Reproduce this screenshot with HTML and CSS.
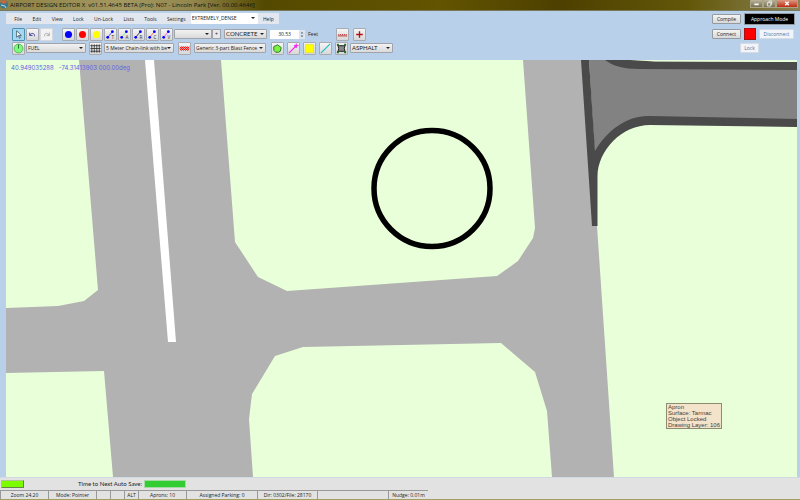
FILE: index.html
```
<!DOCTYPE html>
<html lang="en">
<head>
<meta charset="utf-8">
<title>Airport Design Editor X</title>
<link rel="stylesheet" href="styles.css">
</head>
<body>
<header class="titlebar">
  <svg class="logo" viewBox="0 0 8 9"><circle cx="4" cy="4.500" r="4" fill="#367b91"/><path d="M0 2 4 0 7 2 4 4Z" fill="#d96138"/><path d="m1 5 4 1 1 2" stroke="#b9dbdf" fill="none"/></svg>
  <h1 class="title">AIRPORT DESIGN EDITOR X&nbsp; v01.51.4645 BETA (Pro): N07 - Lincoln Park [Ver. 00.00.4646]</h1>
  <div class="window-buttons">
    <button class="win" aria-label="Minimize"><svg viewBox="0 0 13 8"><path d="M4 5h5" stroke="#fff" stroke-width="2"/></svg></button>
    <button class="win" aria-label="Restore"><svg viewBox="0 0 13 8"><path d="M4 3h4v4H4zM6 3V1h3v4H8" stroke="#eee" fill="none"/></svg></button>
    <button class="win close" aria-label="Close"><svg viewBox="0 0 22 8"><path d="m9 2 4 4m0-4L9 6" stroke="#fff" stroke-width="1.500"/></svg></button>
  </div>
</header>
<div class="commands">
  <div class="left">
    <nav class="menu">
      <button>File</button><button>Edit</button><button>View</button><button>Lock</button><button>Un-Lock</button><button>Lists</button><button>Tools</button><button>Settings</button>
      <span class="combo flat density"><select aria-label="Scenery density"><option>EXTREMELY_DENSE</option></select></span>
      <button class="help">Help</button>
    </nav>
    <div class="toolbar">
      <div class="group first">
        <button class="tool active" aria-label="Pointer"><svg viewBox="0 0 14 14"><path d="M5 3v7l2-2 1 3 1-.5L8 8h2Z" fill="#fff" stroke="#234" stroke-width=".7"/></svg></button>
        <button class="tool" aria-label="Undo"><svg viewBox="0 0 14 14"><path d="M4 5v3h3M4 8c1-3 6-3 5 1" stroke="#3a3a9c" fill="none"/></svg></button>
        <button class="tool off" aria-label="Redo"><svg viewBox="0 0 14 14"><path d="M10 5v3H7m3 0C9 5 4 5 5 9" stroke="#aaa" fill="none"/></svg></button>
      </div>
      <div class="group shapes">
        <button class="tool" aria-label="Blue point"><svg viewBox="0 0 14 14"><circle cx="7" cy="7" r="3.800" fill="#00f"/></svg></button>
        <button class="tool" aria-label="Red point"><svg viewBox="0 0 14 14"><circle cx="7" cy="7" r="3.800" fill="red"/></svg></button>
        <button class="tool" aria-label="Yellow point"><svg viewBox="0 0 14 14"><circle cx="7" cy="7" r="3.800" fill="#ff0"/></svg></button>
        <button class="tool" aria-label="Taxi link"><svg viewBox="0 0 14 14"><path d="m4 10 5-6" stroke="#44f"/><circle cx="4" cy="10" r="1.500" fill="#00f"/><circle cx="9" cy="4" r="1.500" fill="#00f"/><text x="8" y="12">T</text></svg></button>
        <button class="tool" aria-label="Apron link"><svg viewBox="0 0 14 14"><path d="m4 10 5-6" stroke="#8e8"/><circle cx="4" cy="10" r="1.500" fill="#00f"/><circle cx="9" cy="4" r="1.500" fill="#00f"/><text x="8" y="12">A</text></svg></button>
        <button class="tool" aria-label="Runway link"><svg viewBox="0 0 14 14"><path d="m4 10 5-6" stroke="#333"/><circle cx="4" cy="10" r="1.500" fill="#00f"/><circle cx="9" cy="4" r="1.500" fill="#00f"/><text x="8" y="12">R</text></svg></button>
        <button class="tool" aria-label="Closed link"><svg viewBox="0 0 14 14"><path d="m4 10 5-6" stroke="#f64"/><circle cx="4" cy="10" r="1.500" fill="#00f"/><circle cx="9" cy="4" r="1.500" fill="#00f"/><text x="8" y="12">C</text></svg></button>
        <button class="tool" aria-label="Vehicle link"><svg viewBox="0 0 14 14"><path d="m4 10 5-6" stroke="#f4f"/><circle cx="4" cy="10" r="1.500" fill="#00f"/><circle cx="9" cy="4" r="1.500" fill="#00f"/><text x="8" y="12">V</text></svg></button>
      </div>
      <span class="combo name"><select aria-label="Taxiway name"><option></option></select></span>
      <button class="plus" aria-label="Add name">+</button>
      <span class="combo surface"><select aria-label="Surface"><option>CONCRETE</option></select></span>
      <input class="width" id="width" value="30.53">
      <span class="spin"><svg viewBox="0 0 5 10"><path d="m1 4 1.500-2L4 4ZM1 6l1.500 2L4 6Z" fill="#567"/></svg></span>
      <label class="unit" for="width">Feet</label>
      <div class="group marks">
        <button class="tool" aria-label="Approach lights"><svg viewBox="0 0 14 14"><path d="M2 8.500h10" stroke="#b22"/><path d="M2.500 7h9" stroke="#b22" stroke-dasharray="1 1"/></svg></button>
        <button class="tool" aria-label="Add marker"><svg viewBox="0 0 14 14"><path d="M7 3.500v7M3.500 7h7" stroke="#b00d14" stroke-width="1.400"/></svg></button>
      </div>
    </div>
    <div class="toolbar">
      <button class="tool" aria-label="Parking"><svg viewBox="0 0 14 14"><circle cx="7" cy="7" r="4.800" fill="#7cfa7c" stroke="#3a9c44" stroke-width=".7"/><path d="M7 2.500V7" stroke="#286b2d"/></svg></button>
      <span class="combo fuel"><select aria-label="Parking type"><option>FUEL</option></select></span>
      <button class="tool" aria-label="Fence"><svg viewBox="0 0 14 14"><path d="M1.500 4h11M1.500 7h11M1.500 10h11M3 2.500v9M5.700 2.500v9M8.400 2.500v9M11.100 2.500v9" stroke="#222" stroke-width=".8"/></svg></button>
      <span class="combo fence"><select aria-label="Fence type"><option>5 Meter Chain-link with be</option></select></span>
      <button class="tool blast-tool" aria-label="Blast fence"><svg viewBox="0 0 14 14"><path d="m2 5 2 2 2-2 2 2 2-2 2 2M2 7l2-2 2 2 2-2 2 2 2-2M2 7l2 2 2-2 2 2 2-2 2 2M2 9l2-2 2 2 2-2 2 2 2-2" stroke="red" fill="none"/></svg></button>
      <span class="combo blast"><select aria-label="Blast fence type"><option>Generic 3-part Blast Fence</option></select></span>
      <div class="group draw">
        <button class="tool" aria-label="Polygon"><svg viewBox="0 0 14 14"><path d="m7 3 4 3-1 4-2 1H5L3 9V5Z" fill="#7cf33e" stroke="#267326"/></svg></button>
        <button class="tool" aria-label="Edge"><svg viewBox="0 0 14 14"><path d="m2 12 8-8M7.500 4h5m-2.500-2.500v5" stroke="#ee30ee" stroke-width="1.300"/></svg></button>
        <button class="tool" aria-label="Fill"><svg viewBox="0 0 14 14"><path d="M2.500 2.500h9v9h-9z" fill="#ff0" stroke="#cc4" stroke-width=".5"/></svg></button>
        <button class="tool" aria-label="Line"><svg viewBox="0 0 14 14"><path d="m2 12 10-10" stroke="#25bec5" stroke-width="1.300"/></svg></button>
        <button class="tool" aria-label="Apron"><svg viewBox="0 0 14 14"><path d="M3 3 5 4h4l2-1-1 4 1 4-2-1H5l-2 1 1-4Z" fill="#888" stroke="#111"/><path d="M2 2h2v2H2zM10 2h2v2h-2zM2 10h2v2H2zM10 10h2v2h-2z" fill="#197323"/></svg></button>
      </div>
      <span class="combo apron"><select aria-label="Apron surface"><option>ASPHALT</option></select></span>
    </div>
  </div>
  <div class="right">
    <div class="actions"><button class="push">Compile</button><button class="push approach">Approach Mode</button></div>
    <div class="actions connect"><button class="push">Connect</button><span class="lamp"></span><button class="push disabled disconnect">Disconnect</button></div>
    <div class="actions lock"><button class="push disabled">Lock</button></div>
  </div>
</div>
<main class="canvas">
  <svg class="map" viewBox="6 60 791 417" preserveAspectRatio="xMinYMin slice">
    <path d="M6 60H797V477H6Z" fill="#e9ffda"/>
    <path d="M79 60H221L235 242 258 277 287 291 497 276 518 261 533 238 535 228 523 60H582L597 226 614 477H552L547 411 535 372 501 343 303 347 275 356 252 394 249 419 253 477H113L104 371 6 373V308L58 306 84 301 98 290Z" fill="#b2b2b2"/>
    <path d="M145 60H154L176 342H168Z" fill="#fff"/>
    <path d="M589 60H797V123H650C620 124 601 145 596 174Z" fill="#828282"/>
    <path d="M581 60H589L595 151C607 130 628 115 650 116L797 119V127L650 125C622 125 598 150 597.500 176V226H592Z" fill="#4a4a4a"/>
    <path d="M605 60H633L655 61.500 797 62V70L640 69C623 69 613 66 605 60Z" fill="#4a4a4a"/>
    <path d="M630 60H797V62L655 61.500Z" fill="#e9ffda"/>
    <circle cx="432" cy="188.500" r="58" fill="none" stroke="#000" stroke-width="5.500"/>
  </svg>
  <div class="coordinates">40.949035288 &nbsp; -74.31413903 000.00deg</div>
  <div class="tooltip">Apron<br>Surface: Tarmac<br>Object Locked<br>Drawing Layer: 106</div>
</main>
<footer class="status">
  <div class="save"><span class="ready"></span><label class="save-label" for="autosave">Time to Next Auto Save:</label><progress id="autosave" max="1" value="1"></progress></div>
  <div class="cells">
    <span class="cell zoom">Zoom 24.20</span><span class="cell mode">Mode: Pointer</span><span class="cell small"></span><span class="cell small"></span><span class="cell small">ALT</span><span class="cell zoom">Aprons: 10</span><span class="cell wide">Assigned Parking: 0</span><span class="cell dir">Dir: 0302/File: 28170</span><span class="cell wide"></span><span class="cell nudge">Nudge: 0.01m</span>
  </div>
</footer>
</body>
</html>
```
FILE: styles.css
```
* { box-sizing: border-box; }
body {
  margin: 0;
  height: 100vh;
  display: flex;
  flex-direction: column;
  overflow: hidden;
  background: #b9d0eb;
  color: #222;
  font: 5px/8px "Open Sans", sans-serif;
}
button, select, input { margin: 0; padding: 0; font: inherit; color: inherit; border: 0; border-radius: 0; }
svg { display: block; }
.titlebar {
  display: flex;
  height: 11px;
  flex: none;
  background: linear-gradient(90deg, #8e8145, #a39860 15%, #93874e 24%, #544900 33%, #625400 55%, #4d4000 70%, #625709 86%, #8c8355);
  border-bottom: 1px solid #77785c;
}
.logo { width: 8px; height: 9px; }
.title { flex: 1; margin: 0 0 0 2px; font-size: 6px; line-height: 10px; font-weight: 400; color: #111; white-space: nowrap; }
.window-buttons { display: flex; height: 8px; margin-right: 2px; }
.win { width: 13px; background: linear-gradient(#bbb49a, #777052); border: 1px solid #aaa386; border-top: 0; }
.win svg { height: 7px; width: 100%; }
.win.close { width: 22px; background: linear-gradient(#dc9a82, #bd2b12); }
.commands { display: flex; justify-content: space-between; height: 49px; flex: none; padding: 2px 5px 0 6px; }
.menu { display: flex; width: 273px; height: 11px; margin-bottom: 3px; padding-left: 3px; background: #e2e7ef; }
.menu button { background: none; padding: 0 4px; flex: 1 0 auto; }
.toolbar { display: flex; align-items: center; height: 14px; padding-left: 6px; }
.group { display: flex; gap: 1px; }
.tool { flex: none; width: 13px; height: 13px; background: linear-gradient(#f5f5f5, #d8d8d8); border: 1px solid #a8acb2; border-radius: 1px; }
.tool svg { width: 13px; height: 13px; margin: -1px; }
.tool text { font-size: 5px; fill: #333; }
.tool.active { background: #a5d8f0; border-color: #4a91b4; }
.tool.off { background: #f2f2f2; border-color: #d5d9dd; }
.shapes { margin-left: 9px; }
.combo { position: relative; flex: none; height: 10px; border: 1px solid #a0a4aa; border-radius: 1px; background: linear-gradient(#f2f2f2, #dadada); }
.combo select { display: block; appearance: none; width: 100%; height: 8px; padding: 0 5px 0 1px; background: none; line-height: 8px; }
.combo::after { content: ""; position: absolute; right: 2px; top: 3px; border: 2px solid transparent; border-top-color: #222; border-bottom: 0; pointer-events: none; }
.combo.flat { background: #fff; border-color: #fff; height: 11px; }
.combo.flat select { padding-left: 0; height: 9px; line-height: 9px; }
.density { width: 67px; }
.name { width: 38px; margin-left: 1px; }
.plus { width: 9px; height: 10px; background: #e8e8e8; border: 1px solid #a0a4aa; line-height: 7px; }
.surface { width: 43px; margin-left: 3px; }
.surface select, .apron select { font: 6px/8px Lato, sans-serif; }
.width { width: 29px; height: 9px; margin-left: 3px; background: #fff; text-align: center; }
.spin { width: 6px; height: 9px; background: #dce5f0; }
.spin svg { width: 6px; height: 9px; }
.unit { width: 31px; padding-left: 3px; }
.marks { gap: 4px; }
.fuel { width: 60px; margin: 0 3px 0 1px; }
.fence { width: 70px; margin-left: 2px; }
.blast-tool { margin: 0 3px 0 4px; }
.blast { width: 72px; }
.draw { gap: 3px; margin: 0 2px 0 5px; }
.apron { width: 43px; }
.right { width: 83px; }
.actions { display: flex; align-items: center; gap: 3px; height: 12px; }
.connect { margin-top: 3px; }
.lock { margin: 2px 0 0 28px; }
.push { width: 29px; height: 10px; background: linear-gradient(#f4f4f4, #d9d9d9); border: 1px solid #9599a0; border-radius: 1px; white-space: nowrap; }
.push.approach { width: 51px; height: 12px; color: #fff; background: #000; }
.lamp { width: 12px; height: 12px; background: red; border: 1px solid #a11; }
.push.disabled { color: #56729a; background: #f1f4f8; border-color: #d5dce5; width: 19px; }
.push.disconnect { width: 35px; }
.canvas { position: relative; flex: 1; min-height: 0; margin: 0 3px 0 6px; }
.map { width: 100%; height: 100%; }
.coordinates { position: absolute; left: 5px; top: 4px; color: #6065e5; font: 6px/8px Inter, sans-serif; white-space: nowrap; }
.tooltip { position: absolute; right: 75px; bottom: 48px; padding: 0 1px; background: #f4e3cb; border: 1px solid #8c8c72; color: #443e38; font: 6px/6px "Liberation Sans", sans-serif; white-space: nowrap; }
.status { flex: none; background: #e2e2e2; border-bottom: 1px solid #a3a05d; border-top: 1px solid #d0dae2; }
.save { display: flex; align-items: center; height: 12px; }
.ready { width: 23px; height: 8px; margin-left: 1px; background: #7cfc00; border: 1px solid #b0c39a; border-right-color: #648644; border-bottom-color: #648644; }
.save-label { width: 66px; margin-left: 54px; font: 6px/8px Lato, sans-serif; white-space: nowrap; }
progress { appearance: none; width: 42px; height: 8px; border: 1px solid #a7d9a7; background: #32cd32; }
progress::-webkit-progress-bar { background: #32cd32; }
progress::-webkit-progress-value { background: #32cd32; }
.cells { display: flex; height: 9px; }
.cell { width: 14px; border-left: 1px solid #999; border-top: 1px solid #999; text-align: center; white-space: nowrap; }
.cell.zoom { width: 48px; }
.cell.mode { width: 48px; }
.cell.wide { width: 71px; }
.cell.dir { width: 60px; }
.cell.nudge { width: 40px; }
```
